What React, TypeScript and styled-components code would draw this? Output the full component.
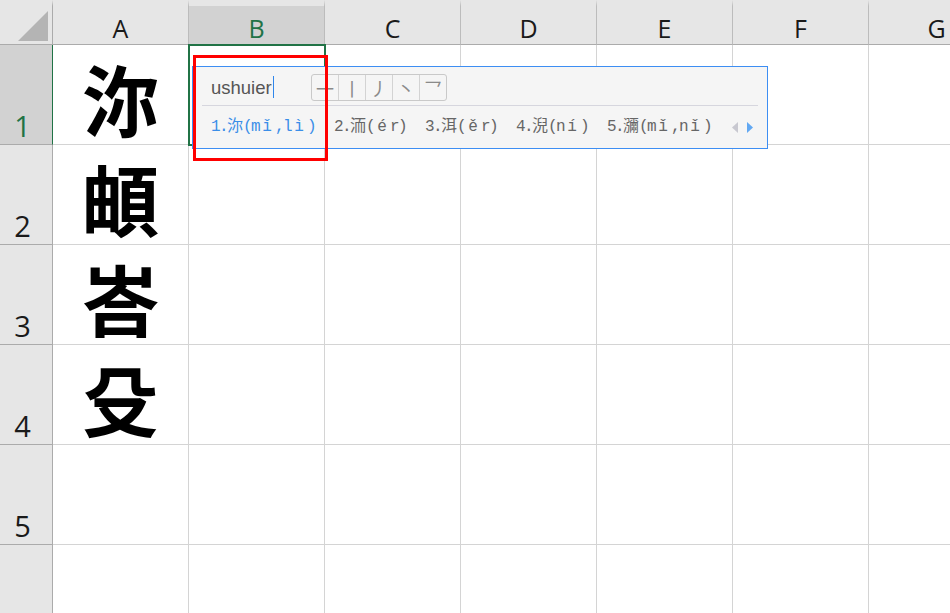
import styled, { createGlobalStyle, css } from 'styled-components';

const GlobalStyle = createGlobalStyle`
  *, *::before, *::after { box-sizing: border-box; }
  html, body { margin: 0; padding: 0; background: #fff; overflow: hidden; }
  body { font-family: 'Open Sans', 'Noto Sans CJK SC', sans-serif; }
`;

const Screen = styled.div`
  position: relative;
  width: 950px;
  height: 613px;
  overflow: hidden;
  background: #fff;
`;

const Sheet = styled.div`
  display: grid;
  grid-template-columns: 53px repeat(7, 136px);
  grid-template-rows: 45px repeat(6, 100px);
`;

const Corner = styled.div`
  background: #e6e6e6;
  border-top: 6px solid #e6e6e6;
  border-right: 1px solid #ababab;
  border-bottom: 1px solid #ababab;
  display: flex;
  align-items: flex-end;
  justify-content: flex-end;
  padding: 0 4px 3px 0;
`;

const ColHead = styled.div<{ $selected?: boolean }>`
  background: ${p => (p.$selected ? '#d2d2d2' : '#e6e6e6')};
  border-top: 6px solid #e6e6e6;
  border-right: 1px solid #bcbcbc;
  border-bottom: 1px solid ${p => (p.$selected ? '#217346' : '#ababab')};
  color: ${p => (p.$selected ? '#217346' : '#1a1a1a')};
  font-size: 25px;
  line-height: 25px;
  display: flex;
  align-items: center;
  justify-content: center;
  padding-top: 6px;
`;

const RowHead = styled.div<{ $selected?: boolean }>`
  background: ${p => (p.$selected ? '#d2d2d2' : '#e6e6e6')};
  border-right: 1px solid ${p => (p.$selected ? '#217346' : '#ababab')};
  border-bottom: 1px solid #ababab;
  color: ${p => (p.$selected ? '#217346' : '#1a1a1a')};
  font-size: 29px;
  line-height: 29px;
  display: flex;
  align-items: flex-end;
  justify-content: center;
  padding: 0 7px 4px 0;
`;

const Cell = styled.div<{ $active?: boolean }>`
  border-right: 1px solid #d4d4d4;
  border-bottom: 1px solid #d4d4d4;
  display: flex;
  align-items: center;
  justify-content: center;
  padding-top: 6px;
  font-family: 'Noto Sans CJK SC', sans-serif;
  font-weight: 700;
  font-size: 77px;
  line-height: 1;
  color: #000;
  ${p =>
    p.$active &&
    css`
      position: relative;
      z-index: 1;
      outline: 2px solid #217346;
      outline-offset: -1px;
    `}
`;

const Ime = styled.div`
  position: absolute;
  left: 192px;
  top: 66px;
  width: 576px;
  height: 83px;
  z-index: 2;
  background: #f5f5f5;
  border: 1px solid #3d8ef3;
  padding: 0 9px;
  display: flex;
  flex-direction: column;
`;

const ImeTop = styled.div`
  height: 39px;
  display: flex;
  align-items: center;
  padding: 3px 0 0 9px;
  border-bottom: 1px solid #d6d6de;
`;

const InputText = styled.div`
  width: 100px;
  display: flex;
  align-items: center;
  margin-top: 1px;
  font-family: 'Liberation Sans', Arial, sans-serif;
  font-size: 18.5px;
  line-height: 1;
  color: #555;
`;

const Caret = styled.span`
  width: 1px;
  height: 22px;
  margin: 0 0 2px 1px;
  background: #2f86eb;
`;

const StrokeBox = styled.div`
  display: flex;
  height: 27px;
  border: 1px solid #c9c9c9;
  border-radius: 3px;
`;

const StrokeKey = styled.div`
  width: 26px;
  display: flex;
  align-items: center;
  justify-content: center;
  font-family: 'Noto Sans CJK SC', sans-serif;
  font-size: 18px;
  line-height: 1;
  color: #8a8a8a;
  & + & {
    width: 27px;
    border-left: 1px solid #d3d3d3;
  }
`;

const CandRow = styled.div`
  flex: 1;
  display: flex;
  align-items: center;
  gap: 19px;
  padding-left: 9px;
`;

const Candidate = styled.span<{ $current?: boolean }>`
  display: inline-flex;
  font-family: 'Liberation Mono', 'Noto Sans CJK SC', monospace;
  font-size: 16px;
  line-height: 1;
  color: ${p => (p.$current ? '#3a8ee8' : '#666')};
`;

const Glyph = styled.span<{ $wide?: boolean }>`
  display: inline-block;
  width: ${p => (p.$wide ? '1em' : '0.5em')};
  text-align: center;
`;

const Pager = styled.div`
  margin-left: auto;
  margin-right: 5px;
  display: flex;
  align-items: center;
  gap: 9px;
`;

const Highlight = styled.div`
  position: absolute;
  left: 193px;
  top: 55px;
  width: 135px;
  height: 106px;
  z-index: 3;
  border: 3px solid #ff0000;
  pointer-events: none;
`;

const columns = ['A', 'B', 'C', 'D', 'E', 'F', 'G'];
// the sixth row's number sits below the visible area
const rows = [
  { label: '1', ch: '沵' },
  { label: '2', ch: '頔' },
  { label: '3', ch: '峇' },
  { label: '4', ch: '殳' },
  { label: '5', ch: '' },
  { label: '', ch: '' },
];
const strokes = ['一', '丨', '丿', '丶', '乛'];
const candidates = ['1.沵(mǐ,lì)', '2.洏(ér)', '3.洱(ěr)', '4.淣(ní)', '5.瀰(mǐ,nǐ)'];

const isWide = (ch: string) => ch.charCodeAt(0) >= 0x2e80 || /[āáǎàēéěèīíǐìōóǒòūúǔùǖǘǚǜ]/.test(ch);

const CandText = ({ text, current }: { text: string; current?: boolean }) => (
  <Candidate $current={current}>
    {Array.from(text).map((ch, i) => (
      <Glyph key={i} $wide={isWide(ch)}>
        {ch}
      </Glyph>
    ))}
  </Candidate>
);

const App = () => (
  <Screen>
    <GlobalStyle />
    <Sheet>
      <Corner>
        <svg width="30" height="30" viewBox="0 0 30 30">
          <polygon points="0,30 30,30 30,0" fill="#b4b4b4" />
        </svg>
      </Corner>
      {columns.map(c => (
        <ColHead key={c} $selected={c === 'B'}>
          {c}
        </ColHead>
      ))}
      {rows.map((row, r) => [
        <RowHead key={`h${r}`} $selected={r === 0}>
          {row.label}
        </RowHead>,
        ...columns.map((c, ci) => (
          <Cell key={`${r}${c}`} $active={r === 0 && c === 'B'}>
            {ci === 0 ? row.ch : null}
          </Cell>
        )),
      ])}
    </Sheet>

    <Ime>
      <ImeTop>
        <InputText>
          ushuier
          <Caret />
        </InputText>
        <StrokeBox>
          {strokes.map(s => (
            <StrokeKey key={s}>{s}</StrokeKey>
          ))}
        </StrokeBox>
      </ImeTop>
      <CandRow>
        {candidates.map((c, i) => (
          <CandText key={c} text={c} current={i === 0} />
        ))}
        <Pager>
          <svg width="6" height="11" viewBox="0 0 6 11">
            <polygon points="6,0 6,11 0,5.5" fill="#c8c8d0" />
          </svg>
          <svg width="6" height="11" viewBox="0 0 6 11">
            <polygon points="0,0 0,11 6,5.5" fill="#62a8f2" />
          </svg>
        </Pager>
      </CandRow>
    </Ime>

    <Highlight />
  </Screen>
);

export default App;
